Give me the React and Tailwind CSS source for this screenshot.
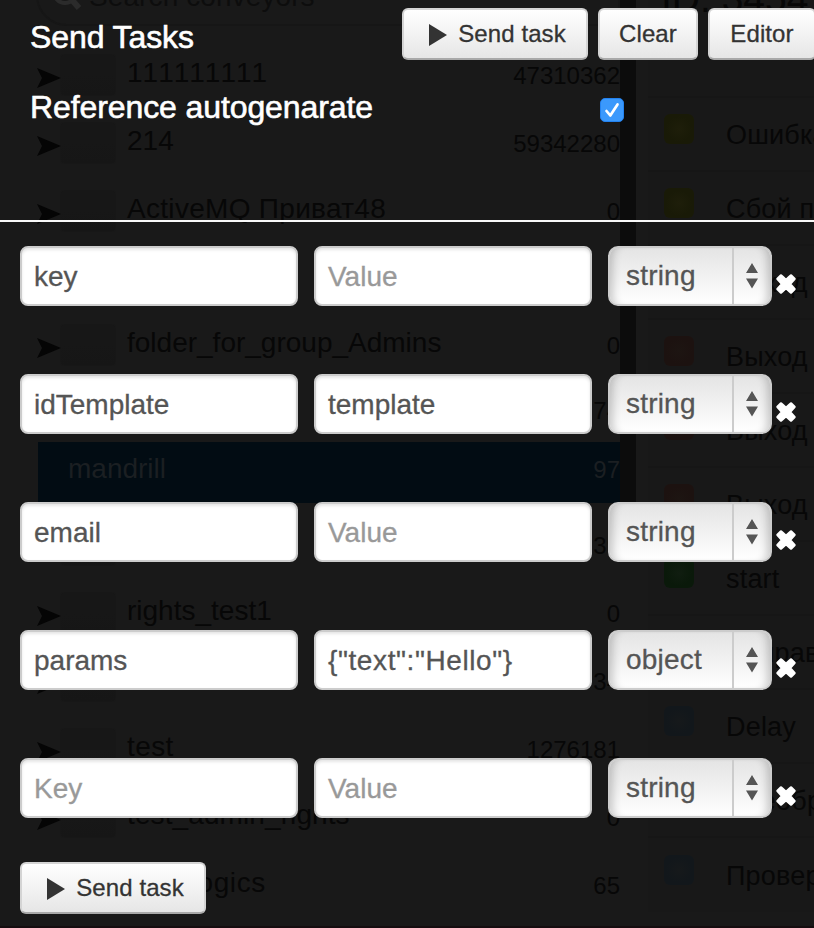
import React from "react";

const folders = [
  { name: "111111111", count: "47310362", h: "h-[68px]", track: "[font-kerning:none]" },
  { name: "214", count: "59342280", h: "h-[68px]", track: "" },
  { name: "ActiveMQ Приват48", count: "0", h: "h-[68px]", track: "tracking-[0.3px]" },
  { name: "", count: "", h: "h-[66px]", track: "" },
  { name: "folder_for_group_Admins", count: "0", h: "h-[68px]", track: "" },
  { name: "", count: "74", h: "h-[61px]", track: "" },
  { name: "mandrill", count: "97", active: true },
  { name: "", count: "39", h: "h-[68px]", track: "" },
  { name: "rights_test1", count: "0", h: "h-[68px]", track: "" },
  { name: "", count: "34", h: "h-[68px]", track: "" },
  { name: "test", count: "1276181", h: "h-[68px]", track: "tracking-[0.4px]" },
  { name: "test_admin_rights", count: "0", h: "h-[68px]", track: "tracking-[0.1px]" },
  { name: "test_logics", count: "65", h: "h-[68px]", track: "tracking-[0.6px]", plain: true },
];

const yellow = "bg-[radial-gradient(circle,#1e1e0a_0%,#191a07_60%)]";
const red = "bg-[radial-gradient(circle,#1d1512_0%,#1c1210_60%)]";
const green = "bg-[radial-gradient(circle,#101d10_0%,#0a190a_60%)]";
const blue = "bg-[radial-gradient(circle,#16191b_0%,#12171b_60%)]";

const nodes = [
  ["Ошибка", yellow],
  ["Сбой при", yellow],
  ["Выход", red],
  ["Выход", red],
  ["Выход", red],
  ["Выход", red],
  ["start", green],
  ["Отправка", blue],
  ["Delay", blue],
  ["Преобраз", blue],
  ["Проверка", blue],
];

const params = [
  { k: "key", v: "", type: "string" },
  { k: "idTemplate", v: "template", type: "string" },
  { k: "email", v: "", type: "string" },
  { k: "params", v: '{"text":"Hello"}', type: "object" },
  { k: "", v: "", type: "string" },
];

function FolderRow({ f }) {
  if (f.active) {
    return (
      <div className="mb-[10px] ml-[38px] flex h-[61px] items-center justify-between bg-[#020c13] pb-2 pl-[30px] text-[#1b1f22]">
        <span className="text-[28px] leading-8">{f.name}</span>
        <span className="mt-[2px] text-[24px] leading-8">{f.count}</span>
      </div>
    );
  }
  return (
    <div className={`flex items-center pl-[37px] ${f.h}`}>
      <svg
        width="24"
        height="20"
        viewBox="0 0 24 20"
        className={f.plain ? "mt-px shrink-0 opacity-0" : "mt-px shrink-0"}
      >
        <path d="M0 0L24 10L0 20L5 10Z" fill="#050505" />
      </svg>
      <span
        className={
          f.plain
            ? "h-[40px] w-[54px] shrink-0"
            : "mb-1 h-[40px] w-[54px] shrink-0 rounded-[4px] bg-[linear-gradient(#171717,#171717_50%,#161616)] shadow-[0_0_1px_#131313]"
        }
      />
      <span className={`mb-2 ml-3 grow whitespace-nowrap text-[28px] leading-8 ${f.track}`}>
        {f.name}
      </span>
      <span className="mb-[2px] text-[24px] leading-8">{f.count}</span>
    </div>
  );
}

function Button({ children, play, size }) {
  return (
    <button
      className={`flex h-[52px] shrink-0 items-center justify-center rounded-[6px] border-2 border-[#d4d4d4] border-b-[#a8a8a8] bg-[linear-gradient(#ffffff,#e6e6e6)] text-[24px] tracking-[0.1px] whitespace-nowrap text-[#333] [-webkit-text-stroke:0.3px_#333] ${size}`}
    >
      {play && (
        <svg width="20" height="24" viewBox="0 0 20 24" className="mt-[2px] mr-[10px] ml-1">
          <path d="M1 1L19 12L1 23Z" fill="#333" />
        </svg>
      )}
      <span className="pb-px">{children}</span>
    </button>
  );
}

function Field({ value, placeholder }) {
  return (
    <div
      className={`flex h-[60px] w-[278px] shrink-0 items-center rounded-[8px] border-2 border-[#ccc] bg-white pt-[2px] pl-3 text-[28px] shadow-[inset_0_2px_3px_rgba(0,0,0,0.1)] ${
        value
          ? "text-[#555] [-webkit-text-stroke:0.3px_#555]"
          : "text-[#999] [-webkit-text-stroke:0.3px_#999]"
      } ${value.startsWith("{") ? "tracking-[0.6px]" : ""}`}
    >
      {value || placeholder}
    </div>
  );
}

function TypeSelect({ value }) {
  return (
    <div className="flex h-[60px] w-[164px] shrink-0 overflow-hidden rounded-[10px] border-2 border-[#ccc] bg-[linear-gradient(#e4e4e4,#fff)] text-[#555] shadow-[inset_9px_0_8px_-6px_rgba(0,0,0,0.2),inset_-9px_0_8px_-6px_rgba(0,0,0,0.2)]">
      <span className="flex w-[122px] items-center pb-px pl-4 text-[28px] tracking-[0.2px] [-webkit-text-stroke:0.3px_#555]">
        {value}
      </span>
      <span className="flex w-[38px] items-center justify-center border-l-2 border-[#ccc] pr-px">
        <svg width="12" height="26" viewBox="0 0 12 26">
          <path d="M6 0L12 10H0Z M0 15.500H12L6 25.500Z" fill="#555" />
        </svg>
      </span>
    </div>
  );
}

function Background() {
  return (
    <div className="flex h-full w-full bg-[#191919] text-[#070707]">
      <div className="w-[620px] shrink-0">
        <div className="flex h-[43px]">
          <div className="mt-[-36px] ml-9 flex h-[62px] w-[584px] rounded-l-[31px] border-2 border-[#161616] pl-3">
            <svg width="34" height="34" viewBox="0 0 34 34" className="mt-[11px] shrink-0">
              <circle cx="15" cy="15" r="11" fill="none" stroke="#2b2b2b" strokeWidth="4" />
              <path d="M22 23L29 31" stroke="#2b2b2b" strokeWidth="6" />
            </svg>
            <span className="mt-[15px] ml-[5px] text-[28px] leading-8 tracking-[0.1px] whitespace-nowrap text-[#0d0d0d]">
              Search conveyors
            </span>
          </div>
        </div>
        {folders.map((f, i) => (
          <FolderRow key={i} f={f} />
        ))}
      </div>
      <div className="h-[507px] w-4 shrink-0 bg-[#0c0c0c]" />
      <div className="w-[178px] shrink-0 overflow-hidden pl-3">
        <div className="flex h-[98px] border-b-2 border-[#161616] bg-[#181818] pl-[13px]">
          <div className="mt-[-23px] text-[39px] leading-[44px] whitespace-nowrap">ID. 3454</div>
        </div>
        {nodes.map(([label, color], i) => (
          <div
            key={i}
            className="flex h-[74px] items-center border-b-2 border-[#161616] bg-[#181818] pl-4 last:border-b-0"
          >
            <span className={`mb-[10px] size-[30px] shrink-0 rounded-[6px] ${color}`} />
            <span className="mt-px ml-8 text-[27px] leading-8 tracking-[0.2px] whitespace-nowrap">
              {label}
            </span>
          </div>
        ))}
      </div>
    </div>
  );
}

export default function App() {
  return (
    <div className="relative h-[928px] w-[814px] overflow-hidden font-['Liberation_Sans',Arial,sans-serif]">
      <Background />
      <div className="absolute inset-0 flex flex-col border-b-2 border-[#150d10]">
        <header className="h-[222px] shrink-0 border-b-2 border-[#f8f8f8] text-white">
          <div className="flex h-[60px] gap-[10px] pt-2 pl-[30px]">
            <h1 className="mt-[10px] w-[362px] shrink-0 text-[32px] leading-[38px] tracking-[-0.1px] [-webkit-text-stroke:0.6px_white]">
              Send Tasks
            </h1>
            <Button play size="w-[186px]">Send task</Button>
            <Button size="w-[100px]">Clear</Button>
            <Button size="w-[108px]">Editor</Button>
          </div>
          <label className="mt-7 flex h-[38px] w-[624px] items-center justify-between pl-[30px] text-[32px] leading-[38px] tracking-[-0.1px] [-webkit-text-stroke:0.6px_white]">
            Reference autogenarate
            <span className="mt-[6px] flex size-6 items-center justify-center rounded-[5px] border border-[#2382f0] bg-[#3b99fc]">
              <svg width="18" height="18" viewBox="0 0 18 18">
                <path
                  d="M3.500 10L7.300 14.500L14.500 3.500"
                  fill="none"
                  stroke="#fff"
                  strokeWidth="2.700"
                  strokeLinecap="round"
                  strokeLinejoin="round"
                />
              </svg>
            </span>
          </label>
        </header>
        <main className="flex flex-col gap-[68px] pt-6 pl-5">
          {params.map((p, i) => (
            <div key={i} className="flex gap-4">
              <Field value={p.k} placeholder="Key" />
              <Field value={p.v} placeholder="Value" />
              <div className="flex items-center gap-[3px]">
                <TypeSelect value={p.type} />
                <svg width="22" height="22" viewBox="0 0 22 22" className="mt-4 shrink-0">
                  <path
                    d="M6 2.500L11 7L16 2.500L19.500 6L15 11L19.500 16L16 19.500L11 15L6 19.500L2.500 16L7 11L2.500 6Z"
                    fill="#fff"
                    strokeLinejoin="round"
                    stroke="#fff"
                    strokeWidth="2.500"
                  />
                </svg>
              </div>
            </div>
          ))}
        </main>
        <footer className="pt-11 pl-5">
          <Button play size="w-[186px]">Send task</Button>
        </footer>
      </div>
    </div>
  );
}
